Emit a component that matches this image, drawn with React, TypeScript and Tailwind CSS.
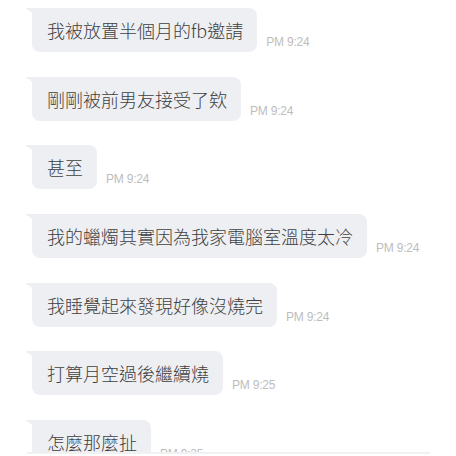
import React from 'react';

const messages = [
  { text: '我被放置半個月的fb邀請', time: 'PM 9:24' },
  { text: '剛剛被前男友接受了欸', time: 'PM 9:24' },
  { text: '甚至', time: 'PM 9:24' },
  { text: '我的蠟燭其實因為我家電腦室溫度太冷', time: 'PM 9:24' },
  { text: '我睡覺起來發現好像沒燒完', time: 'PM 9:24' },
  { text: '打算月空過後繼續燒', time: 'PM 9:25' },
  { text: '怎麼那麼扯', time: 'PM 9:25' },
];

const Bubble = ({ text, time }: { text: string; time: string }) => (
  <div className="flex items-end">
    <div className="relative h-[44px] flex items-center rounded-lg rounded-tl-none bg-[#eeeff3] pl-[15px] pr-[14px] text-[18px] font-light leading-none text-[#3f3f3f] whitespace-nowrap">
      <svg
        className="absolute left-[-6px] top-0"
        width="7"
        height="7"
        viewBox="0 0 7 7"
      >
        <path d="M0 1.2 Q0 0 1.5 0 L7 0 L7 7 Q5 2.5 0 1.2 Z" fill="#eeeff3" />
      </svg>
      {text}
    </div>
    <span className="ml-[9px] mb-[2px] text-[12px] leading-[16px] text-[#bdbdbd] tracking-[-0.2px] font-['Liberation_Sans',Arial,sans-serif]">
      {time}
    </span>
  </div>
);

export default function App() {
  return (
    <div className="w-[456px] h-[456px] bg-white overflow-hidden font-['Noto_Sans_CJK_TC','Noto_Sans',sans-serif]">
      <div className="h-[452px] overflow-hidden pl-[32px] pt-[8px] flex flex-col gap-[24.7px]">
        {messages.map((m, i) => (
          <Bubble key={i} text={m.text} time={m.time} />
        ))}
      </div>
      <div className="mx-[27px] w-[403px] h-[2px] bg-[#f1f1f1]" />
      <div className="h-[2px] bg-white" />
    </div>
  );
}
